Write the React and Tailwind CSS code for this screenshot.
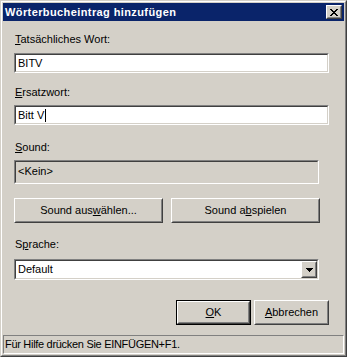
import React from "react";

function Sunken({ className = "", inner = "", children }) {
  return (
    <div className={`border border-t-[#808080] border-l-[#808080] border-r-white border-b-white ${className}`}>
      <div className={`h-full border border-t-[#404040] border-l-[#404040] border-r-[#d4d0c8] border-b-[#d4d0c8] ${inner}`}>
        {children}
      </div>
    </div>
  );
}

function Raised({ className = "", inner = "", children }) {
  return (
    <div className={`bg-[#d4d0c8] border border-t-white border-l-white border-r-[#404040] border-b-[#404040] ${className}`}>
      <div className={`h-full border border-t-[#d4d0c8] border-l-[#d4d0c8] border-r-[#808080] border-b-[#808080] ${inner}`}>
        {children}
      </div>
    </div>
  );
}

function CloseGlyph() {
  const rows = [
    "XX....XX",
    ".XX..XX.",
    "..XXXX..",
    "...XX...",
    "..XXXX..",
    ".XX..XX.",
    "XX....XX",
  ];
  const rects = [];
  rows.forEach((r, y) =>
    r.split("").forEach((c, x) => {
      if (c === "X") rects.push(<rect key={`${x}-${y}`} x={x} y={y} width="1" height="1" fill="#000" />);
    })
  );
  return (
    <svg width="8" height="7" viewBox="0 0 8 7" shapeRendering="crispEdges" className="shrink-0">
      {rects}
    </svg>
  );
}

function ArrowGlyph() {
  return (
    <svg width="7" height="4" viewBox="0 0 7 4" shapeRendering="crispEdges" className="shrink-0">
      <rect x="0" y="0" width="7" height="1" fill="#000" />
      <rect x="1" y="1" width="5" height="1" fill="#000" />
      <rect x="2" y="2" width="3" height="1" fill="#000" />
      <rect x="3" y="3" width="1" height="1" fill="#000" />
    </svg>
  );
}

function Label({ className = "", children }) {
  return <div className={`h-[13px] leading-[13px] pl-px ${className}`}>{children}</div>;
}

export default function App() {
  return (
    <div className="w-[347px] h-[357px] bg-[#d4d0c8] font-['Liberation_Sans',Arial,sans-serif] text-[11px] text-black border border-t-[#d4d0c8] border-l-[#d4d0c8] border-r-[#404040] border-b-[#404040]">
      <div className="h-full border border-t-white border-l-white border-r-[#808080] border-b-[#808080] p-px flex flex-col">
        {/* Title bar */}
        <div className="h-[18px] bg-[#0a246a] flex items-center justify-between pl-[2px] pr-[2px]">
          <span className="text-white font-bold text-[11px] leading-[18px] tracking-[0.4px]">Wörterbucheintrag hinzufügen</span>
          <Raised className="w-[16px] h-[14px]" inner="flex items-center justify-center">
            <CloseGlyph />
          </Raised>
        </div>

        {/* Body */}
        <div className="flex-1 flex flex-col pl-[11px]">
          <Label className="mt-[12px]">
            <u className="underline-offset-[1px]">T</u>atsächliches Wort:
          </Label>
          <Sunken className="mt-[7px] w-[315px] h-[20px]" inner="bg-white flex items-center pl-[2px]">
            <span className="leading-[13px]">BITV</span>
          </Sunken>

          <Label className="mt-[13px]">
            <u className="underline-offset-[1px]">E</u>rsatzwort:
          </Label>
          <Sunken className="mt-[6px] w-[315px] h-[20px]" inner="bg-white flex items-center pl-[2px]">
            <span className="leading-[13px]">Bitt V</span>
            <span className="w-px h-[13px] bg-black ml-px" />
          </Sunken>

          <Label className="mt-[16px]">
            <u className="underline-offset-[1px]">S</u>ound:
          </Label>
          <Sunken className="mt-[6px] w-[305px] h-[24px]" inner="pl-[2px] pt-[1px]">
            <span className="leading-[13px]">&lt;Kein&gt;</span>
          </Sunken>

          <div className="mt-[14px] flex gap-[8px]">
            <Raised className="w-[149px] h-[25px]" inner="flex items-center justify-center">
              <span>
                Sound aus<u className="underline-offset-[1px]">w</u>ählen...
              </span>
            </Raised>
            <Raised className="w-[149px] h-[25px]" inner="flex items-center justify-center">
              <span>
                Sound a<u className="underline-offset-[1px]">b</u>spielen
              </span>
            </Raised>
          </div>

          <Label className="mt-[15px]">
            S<u className="underline-offset-[1px]">p</u>rache:
          </Label>
          <Sunken className="mt-[8px] w-[305px] h-[21px]" inner="bg-white flex items-stretch">
            <div className="flex-1 flex items-center pl-[2px]">Default</div>
            <Raised className="w-[16px]" inner="flex items-center justify-center">
              <ArrowGlyph />
            </Raised>
          </Sunken>

          <div className="mt-[20px] w-[315px] flex justify-end gap-[3px]">
            <div className="w-[75px] h-[25px] border border-black">
              <Raised className="h-full" inner="flex items-center justify-center">
                <span>
                  <u className="underline-offset-[1px]">O</u>K
                </span>
              </Raised>
            </div>
            <Raised className="w-[75px] h-[25px]" inner="flex items-center justify-center">
              <span>
                <u className="underline-offset-[1px]">A</u>bbrechen
              </span>
            </Raised>
          </div>
        </div>

        {/* Status bar */}
        <div className="h-[19px] border border-t-[#808080] border-l-[#808080] border-r-white border-b-white flex items-center pl-px">
          <span className="leading-[13px] tracking-[-0.3px]">Für Hilfe drücken Sie EINFÜGEN+F1.</span>
        </div>
      </div>
    </div>
  );
}
